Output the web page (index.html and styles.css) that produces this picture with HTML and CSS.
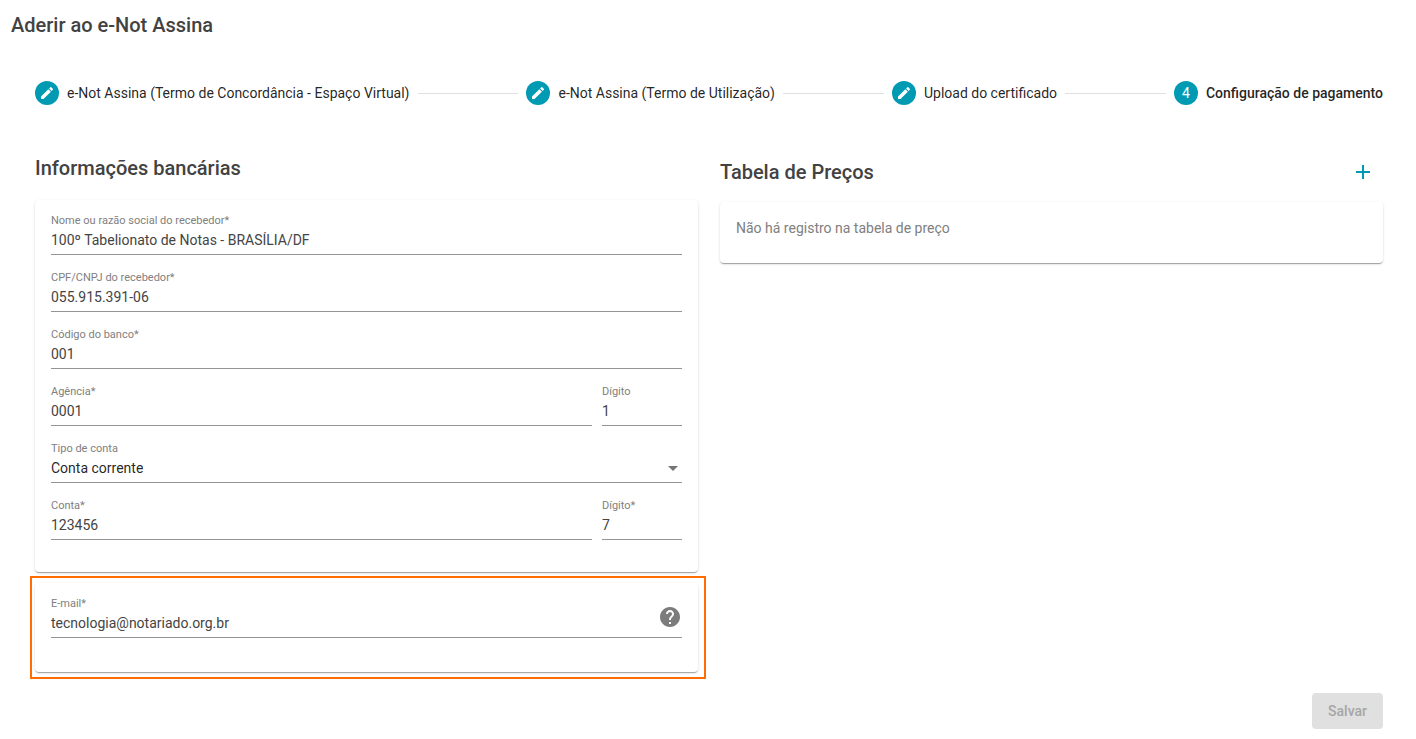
FILE: index.html
```html
<!doctype html>
<html lang="pt-BR">
<head>
    <meta charset="utf-8" />
    <meta name="viewport" content="width=device-width,initial-scale=1" />
    <title>Aderir ao e-Not Assina</title>
    <link rel="stylesheet" href="styles.css">
</head>
<body>
    <h1>Aderir ao e-Not Assina</h1>

    <main>
        <ol class="stepper">
            <li class="step">
                <span class="step-icon"><svg viewBox="0 0 24 24" width="16" height="16"><path d="M3 17.25V21h3.75L17.81 9.94l-3.75-3.75L3 17.25zM20.71 7.04a1 1 0 0 0 0-1.41l-2.34-2.34a1 1 0 0 0-1.41 0l-1.83 1.83 3.75 3.75 1.83-1.83z"/></svg></span>
                <span>e-Not Assina (Termo de Concordância - Espaço Virtual)</span>
            </li>
            <li class="step">
                <span class="step-icon"><svg viewBox="0 0 24 24" width="16" height="16"><path d="M3 17.25V21h3.75L17.81 9.94l-3.75-3.75L3 17.25zM20.71 7.04a1 1 0 0 0 0-1.41l-2.34-2.34a1 1 0 0 0-1.41 0l-1.83 1.83 3.75 3.75 1.83-1.83z"/></svg></span>
                <span>e-Not Assina (Termo de Utilização)</span>
            </li>
            <li class="step">
                <span class="step-icon"><svg viewBox="0 0 24 24" width="16" height="16"><path d="M3 17.25V21h3.75L17.81 9.94l-3.75-3.75L3 17.25zM20.71 7.04a1 1 0 0 0 0-1.41l-2.34-2.34a1 1 0 0 0-1.41 0l-1.83 1.83 3.75 3.75 1.83-1.83z"/></svg></span>
                <span>Upload do certificado</span>
            </li>
            <li class="step active" aria-current="step">
                <span class="step-icon">4</span>
                <span>Configuração de pagamento</span>
            </li>
        </ol>

        <form id="pagamentoForm" novalidate>
            <div class="columns">
                <section>
                    <h2>Informações bancárias</h2>
                    <div class="card fields">
                        <div class="field">
                            <label for="nome">Nome ou razão social do recebedor*</label>
                            <input id="nome" name="nome" type="text" value="100º Tabelionato de Notas - BRASÍLIA/DF" />
                        </div>
                        <div class="field">
                            <label for="cpf">CPF/CNPJ do recebedor*</label>
                            <input id="cpf" name="cpf" type="text" value="055.915.391-06" />
                        </div>
                        <div class="field">
                            <label for="banco">Código do banco*</label>
                            <input id="banco" name="banco" type="text" value="001" />
                        </div>
                        <div class="row">
                            <div class="field">
                                <label for="agencia">Agência*</label>
                                <input id="agencia" name="agencia" type="text" value="0001" />
                            </div>
                            <div class="field digit">
                                <label for="agenciaDigito">Dígito</label>
                                <input id="agenciaDigito" name="agenciaDigito" type="text" value="1" />
                            </div>
                        </div>
                        <div class="field">
                            <label for="tipo">Tipo de conta</label>
                            <div class="select-wrap">
                                <select id="tipo" name="tipo">
                                    <option>Conta corrente</option>
                                    <option>Conta poupança</option>
                                </select>
                                <svg class="arrow" viewBox="0 0 10 5" width="10" height="5"><path d="M0 0h10L5 5z"/></svg>
                            </div>
                        </div>
                        <div class="row">
                            <div class="field">
                                <label for="conta">Conta*</label>
                                <input id="conta" name="conta" type="text" value="123456" />
                            </div>
                            <div class="field digit">
                                <label for="contaDigito">Dígito*</label>
                                <input id="contaDigito" name="contaDigito" type="text" value="7" />
                            </div>
                        </div>
                    </div>

                    <div class="highlight">
                        <div class="card fields">
                            <div class="field email">
                                <label for="email">E-mail*</label>
                                <input id="email" name="email" type="email" value="tecnologia@notariado.org.br" />
                                <button type="button" class="help" aria-label="Ajuda">
                                    <svg viewBox="0 0 24 24" width="24" height="24"><path d="M12 2C6.48 2 2 6.48 2 12s4.48 10 10 10 10-4.48 10-10S17.52 2 12 2zm1 17h-2v-2h2v2zm2.07-7.75-.9.92C13.45 12.9 13 13.5 13 15h-2v-.5c0-1.1.45-2.1 1.17-2.83l1.24-1.26c.37-.36.59-.86.59-1.41 0-1.1-.9-2-2-2s-2 .9-2 2H8c0-2.21 1.79-4 4-4s4 1.79 4 4c0 .88-.36 1.68-.93 2.25z"/></svg>
                                </button>
                            </div>
                        </div>
                    </div>
                </section>

                <section>
                    <div class="section-header">
                        <h2>Tabela de Preços</h2>
                        <button type="button" class="add" aria-label="Adicionar preço">
                            <svg viewBox="0 0 24 24" width="24" height="24"><path d="M19 13h-6v6h-2v-6H5v-2h6V5h2v6h6v2z"/></svg>
                        </button>
                    </div>
                    <div class="card empty">Não há registro na tabela de preço</div>
                </section>
            </div>

            <div class="actions">
                <button type="submit" class="save" disabled>Salvar</button>
            </div>
        </form>
    </main>
</body>
</html>
```
FILE: styles.css
```css
* { box-sizing:border-box; }
body { margin:0; padding:13px 33px 10px 35px; font-family: Roboto, Arial, sans-serif; font-size:14px; color:#444; background:#fff; }
h1, h2 { margin:0; font-size:20px; font-weight:500; color:#424242; }
h1 { line-height:24px; margin-left:-24px; }
h2 { line-height:32px; }
button { font-family:inherit; font-size:14px; border:0; padding:0; background:none; cursor:pointer; }
svg { display:block; fill:currentColor; }

/* Etapas */
.stepper { display:flex; align-items:center; list-style:none; margin:20px 0 23px; padding:0; height:72px; color:rgba(0,0,0,.87); }
.step { display:flex; align-items:center; gap:8px; white-space:nowrap; }
.step:not(:last-child) { flex:1 0 auto; }
.step:not(:last-child)::after { content:""; flex:1; height:1px; background:#e0e0e0; margin-right:8px; }
.step-icon { display:flex; align-items:center; justify-content:center; width:24px; height:24px; border-radius:50%; background:#009ab3; color:#fff; font-weight:400; }
.step.active { font-weight:500; }

/* Colunas */
.columns { display:grid; grid-template-columns:1fr 1fr; gap:22px; }
.section-header { display:flex; align-items:center; justify-content:space-between; height:40px; margin-bottom:10px; }
.add { display:flex; align-items:center; justify-content:center; width:40px; height:40px; color:#009ab3; }
.card { background:#fff; border-radius:4px; box-shadow:0 2px 1px -1px rgba(0,0,0,.2), 0 1px 1px 0 rgba(0,0,0,.14), 0 1px 3px 0 rgba(0,0,0,.12); }
.empty { padding:17px 16px 26px; line-height:18px; color:#808080; }

/* Campos */
.fields { display:flex; flex-direction:column; gap:18px; padding:16px 16px 32px; }
h2 + .fields { margin-top:16px; }
.row { display:flex; gap:10px; }
.field { flex:1; min-width:0; }
.digit { flex:0 0 80px; }
label { display:block; font-size:11px; line-height:10px; color:#808080; }
input, select { display:block; width:100%; height:29px; margin:0; padding:0; border:0; border-bottom:1px solid #949494; border-radius:0; outline:0; background:transparent; color:#444; font-family:inherit; font-size:14px; }
select { appearance:none; color:rgba(0,0,0,.87); }
.select-wrap { position:relative; }
.arrow { position:absolute; right:4px; top:12px; color:#757575; pointer-events:none; }

.highlight { margin:4px -8px 0 -5px; padding:5px 6px 5px 3px; border:2px solid #ff6d00; }
.highlight .fields { padding-bottom:34px; }
.email { position:relative; }
.help { position:absolute; right:0; top:6px; color:#7c7c7c; }

.actions { display:flex; justify-content:flex-end; margin-top:14px; }
.save { height:36px; padding:0 16px; border-radius:4px; font-weight:500; background:#e0e0e0; color:#a6a6a6; cursor:default; }
```
